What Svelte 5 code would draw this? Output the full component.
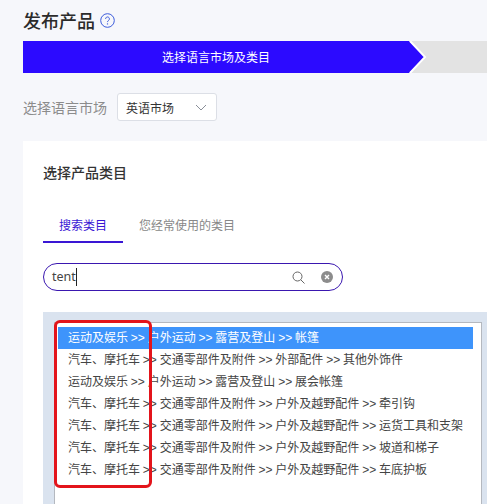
<script lang="ts">
  const rows = [
    '运动及娱乐 >> 户外运动 >> 露营及登山 >> 帐篷',
    '汽车、摩托车 >> 交通零部件及附件 >> 外部配件 >> 其他外饰件',
    '运动及娱乐 >> 户外运动 >> 露营及登山 >> 展会帐篷',
    '汽车、摩托车 >> 交通零部件及附件 >> 户外及越野配件 >> 牵引钩',
    '汽车、摩托车 >> 交通零部件及附件 >> 户外及越野配件 >> 运货工具和支架',
    '汽车、摩托车 >> 交通零部件及附件 >> 户外及越野配件 >> 坡道和梯子',
    '汽车、摩托车 >> 交通零部件及附件 >> 户外及越野配件 >> 车底护板',
  ];
</script>

<div class="page">
  <div class="title-row">
    <h1>发布产品</h1>
    <svg class="help" width="15" height="15" viewBox="0 0 15 15" fill="none">
      <circle cx="7.5" cy="7.5" r="6.8" stroke="#3b5bdb" stroke-width="1" />
      <path d="M5.6 5.9a1.9 1.9 0 1 1 3 1.5c-.8.6-1.1.9-1.1 1.7" stroke="#3b5bdb" stroke-width="1" />
      <circle cx="7.5" cy="10.9" r=".7" fill="#3b5bdb" />
    </svg>
  </div>

  <div class="steps">
    <div class="step-active">选择语言市场及类目</div>
    <svg class="notch" width="18" height="32" viewBox="0 0 18 32" fill="none">
      <path d="M1 0 L16 16 L1 32" stroke="#fff" stroke-width="2" />
    </svg>
  </div>

  <div class="market">
    <span class="market-label">选择语言市场</span>
    <div class="select">
      <span>英语市场</span>
      <svg width="12" height="7" viewBox="0 0 12 7" fill="none">
        <path d="M1 1 L6 6 L11 1" stroke="#8a8f99" stroke-width="1" />
      </svg>
    </div>
  </div>

  <div class="card">
    <h2>选择产品类目</h2>

    <div class="tabs">
      <div class="tab active">搜索类目</div>
      <div class="tab">您经常使用的类目</div>
    </div>

    <div class="search">
      <span class="typed">tent</span>
      <span class="spacer"></span>
      <svg width="13" height="13" viewBox="0 0 13 13" fill="none">
        <circle cx="5.5" cy="5.5" r="4.5" stroke="#666" stroke-width="1" />
        <path d="M8.8 8.8 L12.5 12.5" stroke="#666" stroke-width="1" />
      </svg>
      <svg class="clear" width="12" height="12" viewBox="0 0 12 12" fill="none">
        <circle cx="6" cy="6" r="6" fill="#8c8c8c" />
        <path d="M4 4 L8 8 M8 4 L4 8" stroke="#fff" stroke-width="1.4" />
      </svg>
    </div>

    <div class="results">
      <div class="list">
        {#each rows as row, i}
          <div class="row" class:selected={i === 0}>{row}</div>
        {/each}
      </div>
    </div>

    <div class="callout"></div>
  </div>
</div>

<style>
  :global(body) {
    margin: 0;
    background: #f6f7fb;
  }

  .page {
    position: relative;
    width: 487px;
    height: 504px;
    overflow: hidden;
    padding: 10px 0 0 23px;
    box-sizing: border-box;
    font-family: "Noto Sans CJK SC", "Noto Sans", sans-serif;
    color: #333;
  }

  .title-row {
    display: flex;
    align-items: center;
    gap: 5px;
    height: 21px;
  }

  h1 {
    margin: 0;
    font-size: 18px;
    line-height: 21px;
    font-weight: 500;
    color: #2b2b2b;
  }

  .help {
    flex-shrink: 0;
  }

  .steps {
    position: relative;
    height: 32px;
    margin-top: 10px;
    background: #e3e3e3;
  }

  .step-active {
    width: 402px;
    height: 32px;
    background: #2c0aff;
    color: #fff;
    font-size: 12px;
    line-height: 32px;
    text-align: center;
    box-sizing: border-box;
    padding-right: 16px;
    clip-path: polygon(0 0, 386px 0, 402px 16px, 386px 32px, 0 32px);
  }

  .notch {
    position: absolute;
    left: 386px;
    top: 0;
  }

  .market {
    display: flex;
    align-items: center;
    gap: 10px;
    margin-top: 20px;
  }

  .market-label {
    font-size: 14px;
    color: #8c8c8c;
  }

  .select {
    display: flex;
    align-items: center;
    justify-content: space-between;
    width: 100px;
    height: 28px;
    padding: 0 9px 0 8px;
    box-sizing: border-box;
    background: #fff;
    border: 1px solid #dcdfe6;
    border-radius: 3px;
    font-size: 12px;
    color: #333;
  }

  .card {
    position: relative;
    margin-top: 20px;
    height: 363px;
    padding: 20px 0 0 20px;
    background: #fff;
  }

  h2 {
    margin: 0;
    font-size: 14px;
    line-height: 22px;
    font-weight: 500;
    color: #333;
  }

  .tabs {
    display: flex;
    margin-top: 26px;
  }

  .tab {
    padding: 0 16px;
    height: 34px;
    line-height: 32px;
    box-sizing: border-box;
    font-size: 12px;
    color: #888;
  }

  .tab.active {
    width: 80px;
    color: #3a17d4;
    border-bottom: 2px solid #3a17d4;
  }

  .search {
    display: flex;
    align-items: center;
    gap: 16px;
    width: 300px;
    height: 28px;
    margin-top: 20px;
    padding: 0 9px 0 8px;
    box-sizing: border-box;
    border: 1px solid #3a17b0;
    border-radius: 14px;
    background: #fff;
  }

  .typed {
    font-family: "Noto Sans", sans-serif;
    font-size: 12.5px;
    line-height: 18px;
    color: #444;
    border-right: 1px solid #222;
  }

  .spacer {
    flex: 1;
  }

  .results {
    margin-top: 21px;
    height: 192px;
    padding: 10px 5px 0 11px;
    background: #dae3ef;
  }

  .list {
    height: 100%;
    padding: 4px 8px 0 3px;
    box-sizing: border-box;
    background: #fff;
    border: 1px solid #b4b8bf;
    border-bottom: 0;
  }

  .row {
    height: 22px;
    line-height: 22px;
    padding-left: 10px;
    font-family: "Liberation Sans", "Noto Sans CJK SC", sans-serif;
    font-size: 12px;
    word-spacing: -0.5px;
    color: #444;
    white-space: nowrap;
  }

  .row.selected {
    background: #3e94fb;
    color: #fff;
  }

  .callout {
    position: absolute;
    left: 31px;
    top: 179px;
    width: 92px;
    height: 162px;
    border: 3px solid #e3141b;
    border-radius: 6px;
  }
</style>
